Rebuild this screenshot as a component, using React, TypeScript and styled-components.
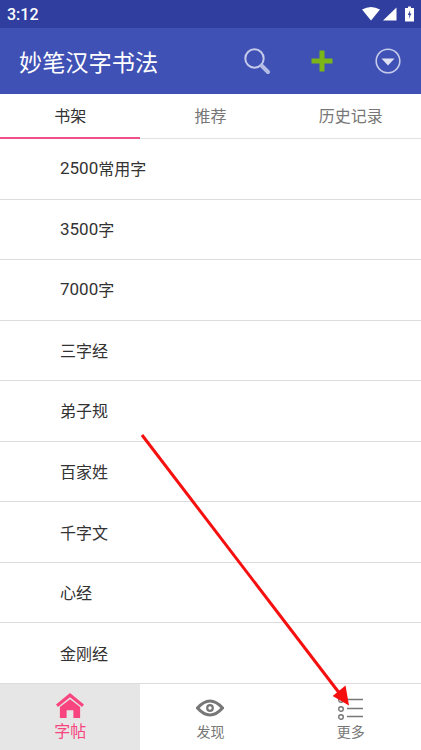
import React from 'react';
import styled, { createGlobalStyle } from 'styled-components';

const Global = createGlobalStyle`
  html, body { margin: 0; padding: 0; background: #fff; }
  body { font-family: Roboto, "Noto Sans CJK SC", sans-serif; }
`;

const Screen = styled.div`
  position: relative;
  width: 421px;
  height: 750px;
  display: flex;
  flex-direction: column;
  overflow: hidden;
  background: #fff;
`;

const StatusBar = styled.div`
  height: 28px;
  background: #303f9f;
  display: flex;
  align-items: center;
  justify-content: space-between;
  padding: 0 7px 0 7px;
  color: #fff;
`;

const Clock = styled.span`
  font-size: 16px;
  font-weight: 500;
`;

const StatusIcons = styled.div`
  display: flex;
  align-items: center;
  gap: 3px;
`;

const AppBar = styled.div`
  height: 66px;
  background: #3f51b5;
  display: flex;
  align-items: center;
  padding-left: 19px;
`;

const Title = styled.div`
  flex: 1;
  color: #fff;
  font-size: 23.2px;
`;

const Action = styled.div<{ $width: number; $left?: number; $right?: number }>`
  width: ${p => p.$width}px;
  margin-left: ${p => p.$left ?? 0}px;
  margin-right: ${p => p.$right ?? 0}px;
  display: flex;
  justify-content: center;
  align-items: center;
`;

const Tabs = styled.div`
  height: 45px;
  display: flex;
  box-sizing: border-box;
  border-bottom: 1px solid #e2e2e2;
`;

const Tab = styled.div<{ $active?: boolean }>`
  flex: 1;
  display: flex;
  align-items: center;
  justify-content: center;
  font-size: 16px;
  color: ${p => (p.$active ? '#333' : '#777')};
  box-shadow: ${p => (p.$active ? 'inset 0 -2px 0 #f0518a' : 'none')};
  margin-bottom: -1px;
  padding-bottom: 4px;
`;

const List = styled.div`
  flex: 1;
  display: flex;
  flex-direction: column;
`;

const Row = styled.div`
  height: 60.55px;
  box-sizing: border-box;
  border-bottom: 1px solid #dcdcdc;
  display: flex;
  align-items: center;
  padding: 0 0 1px 60px;
  font-size: 16px;
  color: #333;
`;

const Digits = styled.span`
  font-size: 17px;
`;

const BottomNav = styled.div`
  height: 66px;
  display: flex;
  background: #fff;
  position: relative;
`;

const NavItem = styled.div<{ $active?: boolean }>`
  flex: 1;
  display: flex;
  flex-direction: column;
  align-items: center;
  background: ${p => (p.$active ? '#e6e6e6' : 'transparent')};
  color: ${p => (p.$active ? '#f8457f' : '#777')};
  font-size: ${p => (p.$active ? 16 : 14)}px;
`;

const NavIcon = styled.div<{ $height: number; $top: number }>`
  height: ${p => p.$height}px;
  padding-top: ${p => p.$top}px;
  box-sizing: border-box;
  display: flex;
  align-items: center;
  justify-content: center;
`;

const ArrowOverlay = styled.svg`
  position: absolute;
  left: 0;
  top: 0;
  pointer-events: none;
`;

const books = [
  { num: '2500', name: '常用字' },
  { num: '3500', name: '字' },
  { num: '7000', name: '字' },
  { name: '三字经' },
  { name: '弟子规' },
  { name: '百家姓' },
  { name: '千字文' },
  { name: '心经' },
  { name: '金刚经' },
];

export default function App() {
  return (
    <Screen>
      <Global />
      <StatusBar>
        <Clock>3:12</Clock>
        <StatusIcons>
          <svg width="18" height="14" viewBox="0 0 18 14">
            <path d="M0 2.5 Q9 -2.5 18 2.5 L9 13.5 Z" fill="#fff" />
          </svg>
          <svg width="14" height="14" viewBox="0 0 14 14">
            <path d="M0 13.5 L13.5 0.5 V13.5 Z" fill="#fff" />
          </svg>
          <svg width="9" height="16" viewBox="0 0 9 16" style={{ marginLeft: 5 }}>
            <path d="M3 0.5 H6 V2 H9 V15.5 H0 V2 H3 Z" fill="#fff" />
            <path d="M5.2 4 L2.8 9 H4.4 L3.8 13 L6.4 7.6 H4.8 Z" fill="#303f9f" />
          </svg>
        </StatusIcons>
      </StatusBar>
      <AppBar>
        <Title>妙笔汉字书法</Title>
        <Action $width={28}>
          <svg width="28" height="28" viewBox="0 0 28 28">
            <circle cx="11.5" cy="11.5" r="9.2" fill="none" stroke="#c5cae9" strokeWidth="2" />
            <path d="M18.5 18.5 L25 25" stroke="#b4bce6" strokeWidth="4" strokeLinecap="round" />
          </svg>
        </Action>
        <Action $width={24} $left={39}>
          <svg width="22" height="22" viewBox="0 0 22 22">
            <path d="M8.5 0.5 H13.5 V8.5 H21.5 V13.5 H13.5 V21.5 H8.5 V13.5 H0.5 V8.5 H8.5 Z" fill="#7cb518" />
          </svg>
        </Action>
        <Action $width={26} $left={41} $right={20}>
          <svg width="26" height="26" viewBox="0 0 26 26">
            <circle cx="13" cy="13" r="11.8" fill="#3f51b5" stroke="#c5cae9" strokeWidth="1.6" />
            <path d="M6.5 10.5 H19.5 L13 17.5 Z" fill="#dfe2f3" />
          </svg>
        </Action>
      </AppBar>
      <Tabs>
        <Tab $active>书架</Tab>
        <Tab>推荐</Tab>
        <Tab>历史记录</Tab>
      </Tabs>
      <List>
        {books.map(b => (
          <Row key={(b.num ?? '') + b.name}>
            {b.num && <Digits>{b.num}</Digits>}
            {b.name}
          </Row>
        ))}
      </List>
      <BottomNav>
        <NavItem $active>
          <NavIcon $height={34} $top={8}>
            <svg width="30" height="27" viewBox="0 0 30 28">
              <path d="M0.5 13 L15 1 L29.5 13 L27.5 15.5 L15 5.5 L2.5 15.5 Z" fill="#f8457f" />
              <path d="M4.5 15.5 L15 7.5 L25.5 15.5 V27 H18.5 V19 H11.5 V27 H4.5 Z" fill="#f8457f" />
            </svg>
          </NavIcon>
          字帖
        </NavItem>
        <NavItem>
          <NavIcon $height={37} $top={11}>
            <svg width="28" height="18" viewBox="0 0 28 18">
              <path d="M1.5 9 Q14 -5 26.5 9 Q14 23 1.5 9 Z" fill="none" stroke="#777" strokeWidth="3.2" />
              <circle cx="14" cy="9" r="2.8" fill="none" stroke="#777" strokeWidth="2.2" />
            </svg>
          </NavIcon>
          发现
        </NavItem>
        <NavItem>
          <NavIcon $height={37} $top={11}>
            <svg width="26" height="24" viewBox="0 0 26 24">
              <circle cx="3" cy="4" r="2.3" fill="none" stroke="#777" strokeWidth="1.4" />
              <circle cx="3" cy="13" r="2.3" fill="none" stroke="#777" strokeWidth="1.4" />
              <circle cx="3" cy="21" r="2.3" fill="none" stroke="#777" strokeWidth="1.4" />
              <path d="M9 3.5 H25 M9 12.5 H25 M9 20.5 H25" stroke="#777" strokeWidth="1.5" />
            </svg>
          </NavIcon>
          更多
        </NavItem>
      </BottomNav>
      <ArrowOverlay width="421" height="750" viewBox="0 0 421 750">
        <path d="M142 435 L340 694" stroke="#f50f0f" strokeWidth="3" />
        <path d="M348 704 L334 696 L345 687 Z" fill="#f50f0f" stroke="#f50f0f" strokeWidth="1.5" />
      </ArrowOverlay>
    </Screen>
  );
}
